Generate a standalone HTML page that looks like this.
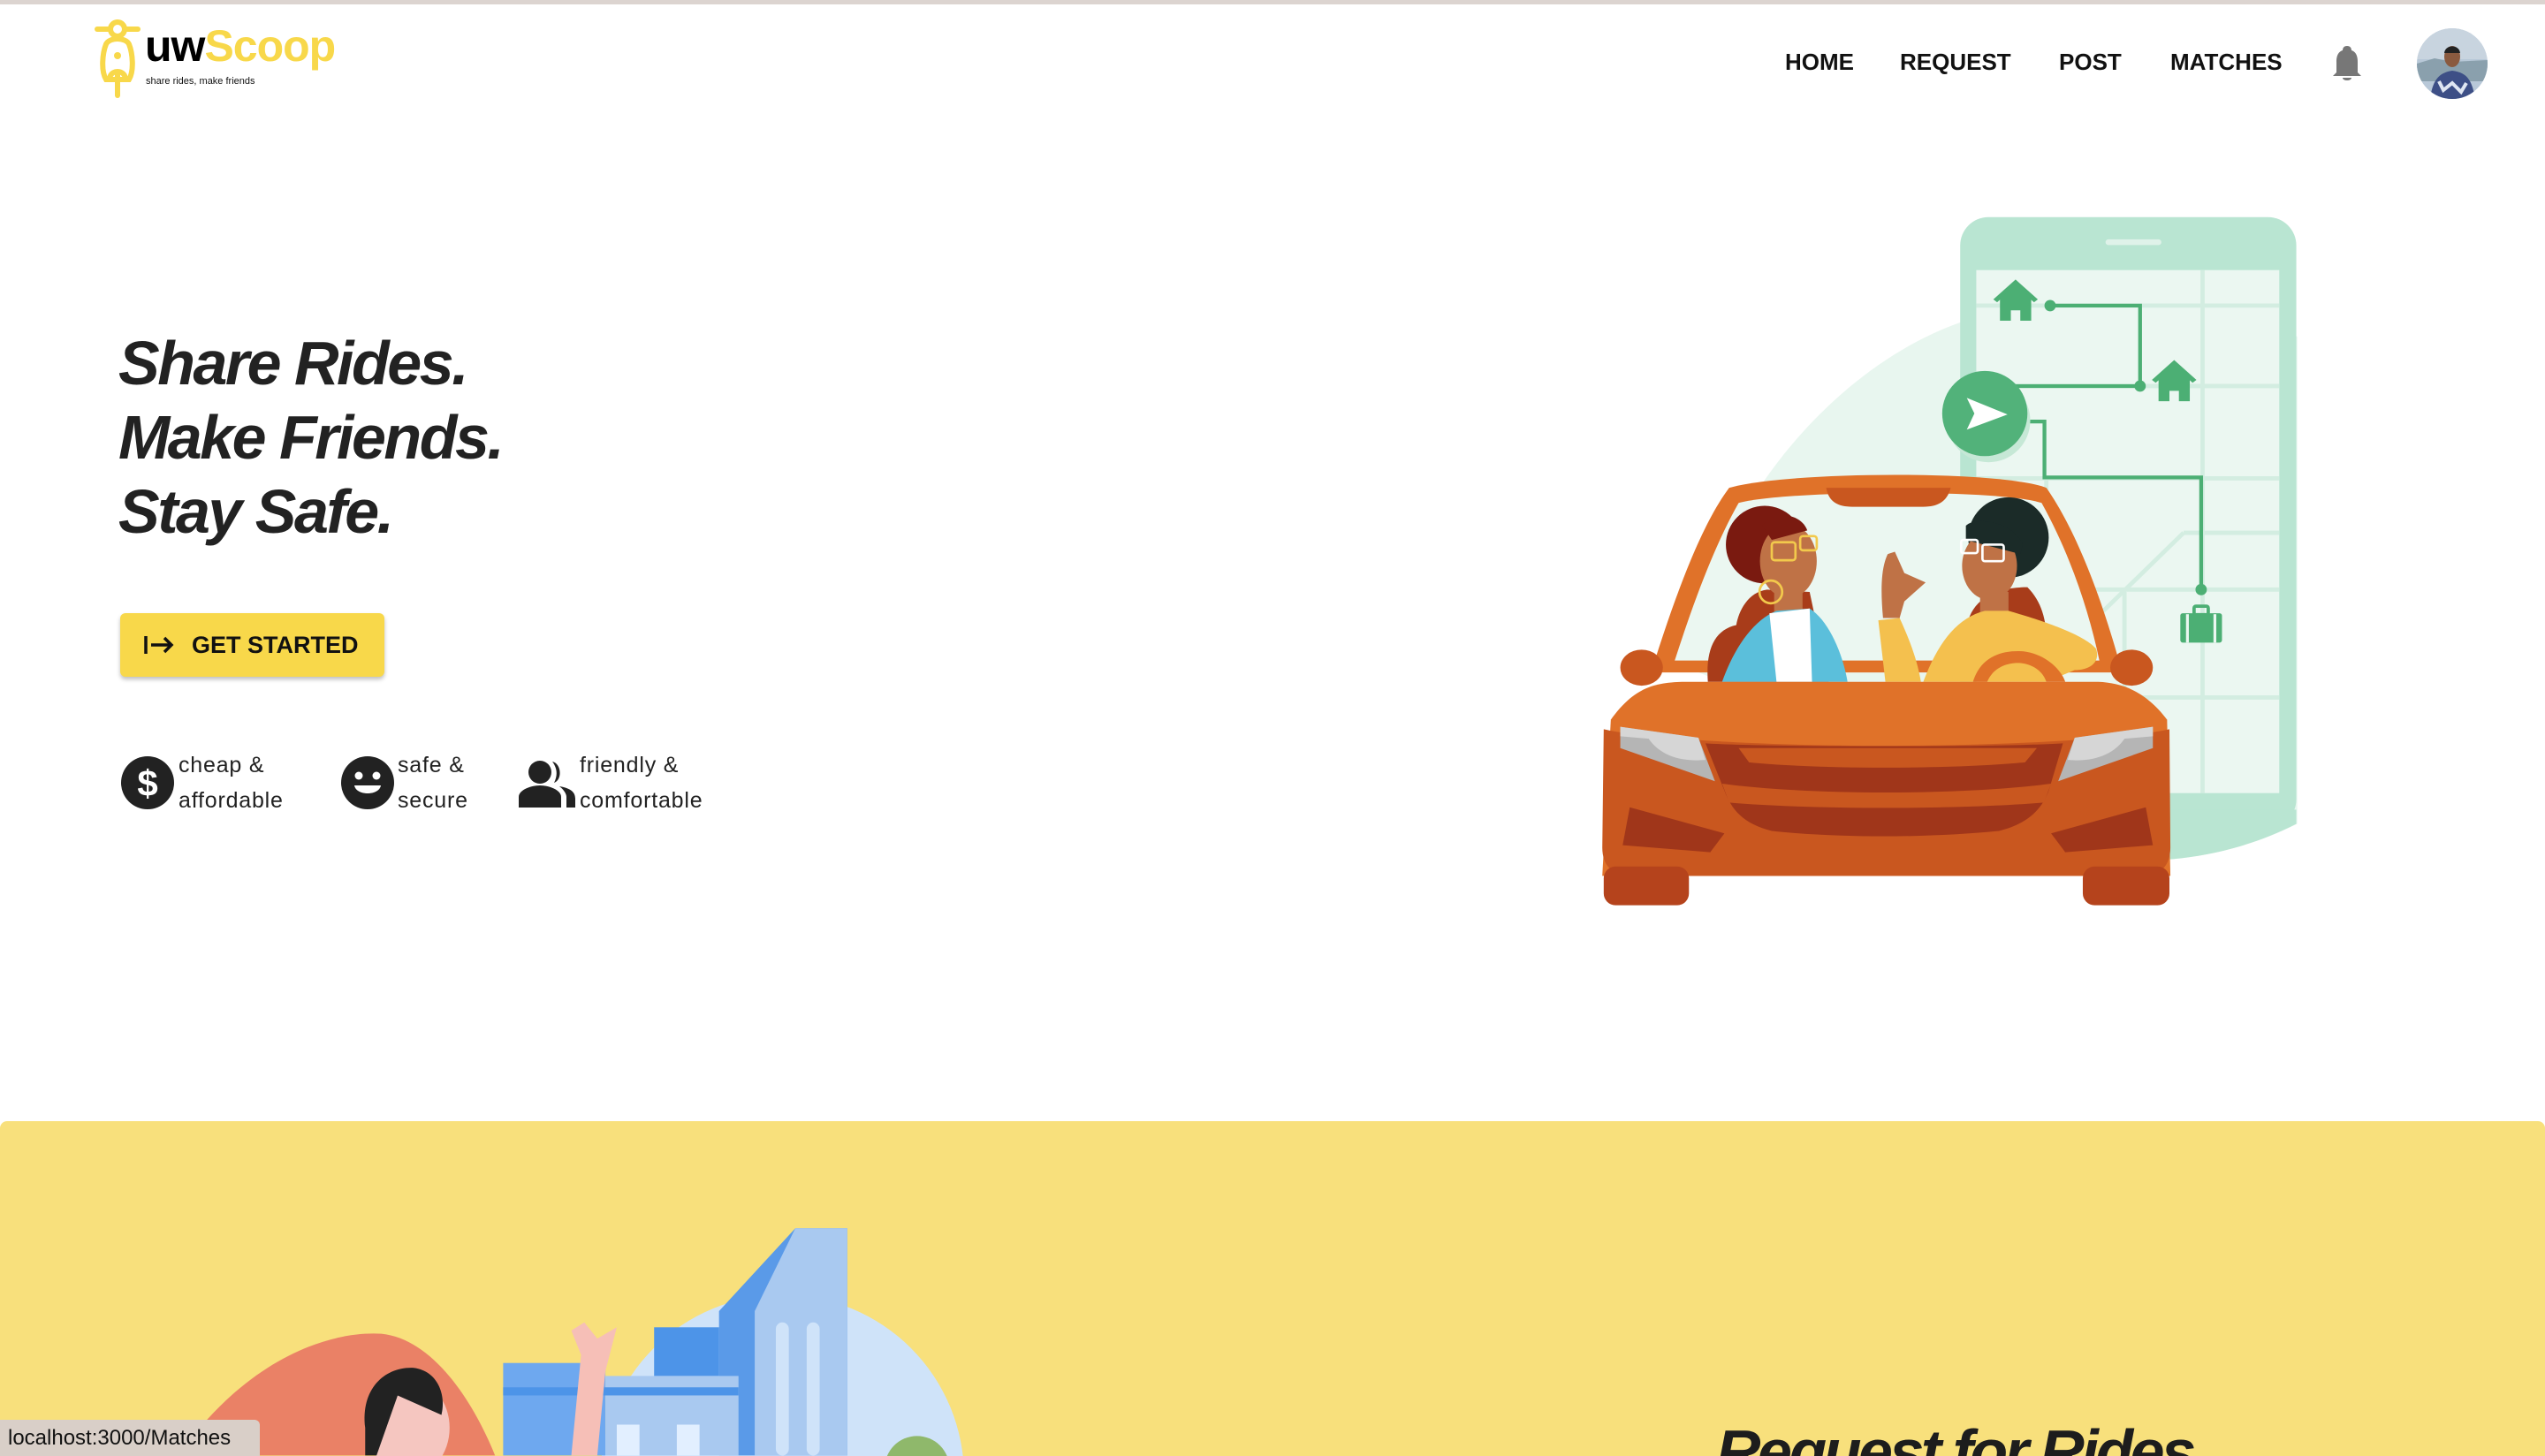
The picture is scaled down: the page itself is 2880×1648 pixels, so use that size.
<!DOCTYPE html>
<html><head><meta charset="utf-8"><style>
html,body{margin:0;padding:0;width:2880px;height:1648px;overflow:hidden;}
body{position:relative;background:#fff;font-family:"Liberation Sans",Arial,sans-serif;color:#222;}
.topline{position:absolute;left:0;top:0;width:2880px;height:5px;background:#dcd4d0;}
.abs{position:absolute;}
.nav a{position:absolute;top:55px;font-size:26px;font-weight:bold;color:#111;text-decoration:none;}
.h1{position:absolute;left:134px;top:369px;font-size:70px;font-weight:bold;font-style:italic;line-height:84px;letter-spacing:-2.5px;color:#222;}
.btn{position:absolute;left:136px;top:694px;width:299px;height:72px;background:#f8d84a;border-radius:6px;box-shadow:0 3px 5px rgba(0,0,0,.25);}
.btn span{position:absolute;left:81px;top:21px;font-size:27px;font-weight:bold;color:#111;}
.feat{position:absolute;top:846px;font-size:25px;line-height:40px;letter-spacing:.8px;color:#222;}
.clip{position:absolute;left:0;top:1269px;width:2880px;height:379px;overflow:hidden;background:#f8e07c;border-radius:8px 8px 0 0;}
.req{position:absolute;left:1942px;top:339px;font-size:70px;font-weight:bold;font-style:italic;letter-spacing:-3.5px;color:#1d1d1d;line-height:1;white-space:nowrap;}
.status{position:absolute;left:0;top:1607px;width:294px;height:41px;background:#d9cfc8;border-top-right-radius:6px;font-size:24px;line-height:41px;padding-left:9px;box-sizing:border-box;color:#111;}
</style></head><body>
<div class="topline"></div>

<svg class="abs" style="left:106px;top:20px" width="56" height="92" viewBox="0 0 56 92">
  <g fill="none" stroke="#f8d84a" stroke-width="6" stroke-linecap="round">
    <line x1="4" y1="13" x2="50" y2="13"/>
    <circle cx="27" cy="13" r="8" fill="#fff"/>
    <path d="M14 70 C 8 60 10 40 14 30 C 18 22 36 22 40 30 C 44 40 46 60 40 70 Z"/>
    <path d="M18 70 C 18 58 36 58 36 70"/>
    <line x1="27" y1="64" x2="27" y2="88"/>
  </g>
  <circle cx="27" cy="43" r="4" fill="#f8d84a"/>
</svg>
<div class="abs" style="left:164px;top:22px;font-size:50px;font-weight:bold;letter-spacing:-1px;line-height:60px;"><span style="color:#000">uw</span><span style="color:#f8d84a">Scoop</span></div>
<div class="abs" style="left:165px;top:86px;font-size:11px;color:#111;">share rides, make friends</div>

<div class="nav">
  <a style="left:2020px">HOME</a>
  <a style="left:2150px">REQUEST</a>
  <a style="left:2330px">POST</a>
  <a style="left:2456px">MATCHES</a>
</div>
<svg class="abs" style="left:2638px;top:50px" width="36" height="44" viewBox="0 0 36 44">
  <path d="M18 2 C 14 2 13 5 13 7 C 7 9 6 15 6 20 L 6 32 L 2 36 L 34 36 L 30 32 L 30 20 C 30 15 29 9 23 7 C 23 5 22 2 18 2 Z" fill="#777"/>
  <path d="M13 38 L 23 38 C 23 42 13 42 13 38 Z" fill="#777"/>
</svg>
<svg class="abs" style="left:2735px;top:32px" width="80" height="80" viewBox="0 0 80 80">
  <defs><clipPath id="av"><circle cx="40" cy="40" r="40"/></clipPath></defs>
  <g clip-path="url(#av)">
    <rect width="80" height="80" fill="#b8c8d8"/>
    <rect y="0" width="80" height="35" fill="#c8d4df"/>
    <path d="M0 40 L 20 34 L 40 38 L 80 36 L 80 60 L 0 60 Z" fill="#8aa0ad"/>
    <path d="M15 80 C 18 55 28 50 40 48 C 54 50 62 55 66 80 Z" fill="#3d4f86"/>
    <path d="M25 60 L 30 70 L 40 62 L 50 72 L 56 62" stroke="#dfe6f2" stroke-width="4" fill="none"/>
    <ellipse cx="40" cy="32" rx="9" ry="12" fill="#8a5a3f"/>
    <path d="M31 28 C 32 18 48 18 49 28 Z" fill="#222"/>
  </g>
</svg>

<div class="h1">Share Rides.<br>Make Friends.<br>Stay Safe.</div>
<div class="btn">
  <svg class="abs" style="left:26px;top:24px" width="36" height="24" viewBox="0 0 36 24"><g stroke="#111" stroke-width="3.5" fill="none"><line x1="3" y1="2" x2="3" y2="22"/><line x1="9" y1="12" x2="32" y2="12"/><polyline points="24,4 32,12 24,20"/></g></svg>
  <span>GET STARTED</span>
</div>

<svg class="abs" style="left:136px;top:855px" width="62" height="62" viewBox="0 0 62 62"><circle cx="31" cy="31" r="30" fill="#222"/><text x="31" y="46" text-anchor="middle" font-family="Liberation Sans" font-weight="bold" font-size="42" fill="#fff">$</text></svg>
<div class="feat" style="left:202px">cheap &amp;<br>affordable</div>
<svg class="abs" style="left:385px;top:855px" width="62" height="62" viewBox="0 0 62 62"><circle cx="31" cy="31" r="30" fill="#222"/><circle cx="21" cy="23" r="4.5" fill="#fff"/><circle cx="41" cy="23" r="4.5" fill="#fff"/><path d="M16 34 L 46 34 C 44 46 18 46 16 34 Z" fill="#fff"/></svg>
<div class="feat" style="left:450px">safe &amp;<br>secure</div>
<svg class="abs" style="left:587px;top:858px" width="66" height="56" viewBox="0 0 66 56"><circle cx="24" cy="16" r="13" fill="#222"/><path d="M0 56 L 0 44 C 0 36 14 31 24 31 C 34 31 48 36 48 44 L 48 56 Z" fill="#222"/><path d="M38 4 C 48 6 50 24 40 28 C 44 20 44 12 38 4 Z" fill="#222"/><path d="M46 32 C 58 34 64 38 64 46 L 64 56 L 54 56 L 54 44 C 54 40 50 35 46 32 Z" fill="#222"/></svg>
<div class="feat" style="left:656px">friendly &amp;<br>comfortable</div>

<svg class="abs" style="left:1780px;top:220px" width="840" height="840" viewBox="0 0 1568 1568">
  <path d="M240 1000 C 300 650 560 360 820 270 L 1530 300 L 1530 1330 C 1420 1385 1320 1400 1260 1405 Z" fill="#e8f6ef"/>
  <rect x="818" y="48" width="710" height="1290" rx="60" fill="#b9e5d2"/>
  <path d="M1528 1300 L 1528 1330 C 1420 1385 1320 1400 1260 1405 L 1260 1300 Z" fill="#b9e5d2"/>
  <rect x="852" y="160" width="640" height="1105" fill="#ebf7f1"/>
  <rect x="1125" y="95" width="118" height="12" rx="6" fill="#dff2e9"/>
  <g stroke="#d3ede1" stroke-width="9" fill="none">
    <line x1="1330" y1="160" x2="1330" y2="1265"/>
    <line x1="852" y1="235" x2="1492" y2="235"/>
    <line x1="852" y1="405" x2="1492" y2="405"/>
    <line x1="852" y1="600" x2="1492" y2="600"/>
    <line x1="1290" y1="715" x2="1492" y2="715"/>
    <line x1="1000" y1="835" x2="1492" y2="835"/>
    <line x1="1000" y1="600" x2="1000" y2="835"/>
    <line x1="852" y1="1063" x2="1492" y2="1063"/>
    <line x1="1290" y1="715" x2="1100" y2="900"/>
    <line x1="1165" y1="840" x2="1165" y2="1265"/>
  </g>
  <g stroke="#4caf74" stroke-width="8" fill="none">
    <path d="M1008 235 H1198 V405 H935"/>
    <path d="M958 480 H996 V598 H1327 V835"/>
  </g>
  <g fill="#4caf74">
    <circle cx="1008" cy="235" r="12"/><circle cx="1198" cy="405" r="12"/><circle cx="1327" cy="835" r="12"/>
    <path d="M888 222 L 935 180 L 982 222 L 974 228 L 935 194 L 896 228 Z"/>
    <path d="M902 220 L 935 192 L 968 220 L 968 267 L 945 267 L 945 245 L 925 245 L 925 267 L 902 267 Z"/>
    <path d="M1223 392 L 1270 350 L 1317 392 L 1309 398 L 1270 364 L 1231 398 Z"/>
    <path d="M1237 390 L 1270 362 L 1303 390 L 1303 437 L 1280 437 L 1280 415 L 1260 415 L 1260 437 L 1237 437 Z"/>
    <rect x="1283" y="885" width="88" height="62" rx="5"/>
    <rect x="1312" y="870" width="30" height="18" rx="4" fill="none" stroke="#4caf74" stroke-width="7"/>
  </g>
  <g stroke="#ebf7f1" stroke-width="6"><line x1="1298" y1="887" x2="1298" y2="947"/><line x1="1356" y1="887" x2="1356" y2="947"/></g>
  <circle cx="878" cy="478" r="88" fill="#c6e8d6"/>
  <circle cx="870" cy="463" r="90" fill="#52b27a"/>
  <path d="M832 430 L 918 465 L 832 497 L 848 463 Z" fill="#fff"/>
  <path d="M165 1010 C 215 850 270 700 330 620 C 450 585 900 582 1000 620 C 1070 720 1125 880 1160 1010 Z" fill="#e07229"/>
  <path d="M215 985 C 255 860 300 740 350 652 C 450 625 900 622 990 652 C 1050 760 1090 880 1112 985 Z" fill="#ebf7f1"/>
  <path d="M535 620 L 798 620 C 790 650 770 660 740 660 L 590 660 C 560 660 540 650 535 620 Z" fill="#c9571f"/>
  <path d="M285 1030 C 280 960 300 920 345 910 C 350 880 370 840 410 835 L 500 840 L 540 1030 Z" fill="#a83c1a"/>
  <path d="M835 900 C 850 850 900 830 960 830 C 990 860 1000 900 1000 940 L 850 1030 Z" fill="#a83c1a"/>
  <circle cx="405" cy="740" r="82" fill="#7a1a10"/>
  <ellipse cx="455" cy="775" rx="60" ry="78" fill="#bf7246"/>
  <path d="M400 700 C 420 670 480 670 495 710 L 420 730 Z" fill="#7a1a10"/>
  <rect x="425" y="830" width="60" height="60" fill="#bf7246"/>
  <path d="M315 1030 C 340 960 380 900 430 880 L 500 875 C 540 900 570 970 580 1030 Z" fill="#5bbfdb"/>
  <path d="M415 885 L 500 875 L 505 1030 L 430 1030 Z" fill="#fff"/>
  <circle cx="418" cy="840" r="24" fill="none" stroke="#f2c94c" stroke-width="5"/>
  <g fill="none" stroke="#f2c94c" stroke-width="5"><rect x="420" y="735" width="50" height="38" rx="6"/><rect x="480" y="722" width="35" height="30" rx="6"/></g>
  <circle cx="920" cy="725" r="85" fill="#1b2b28"/>
  <ellipse cx="880" cy="785" rx="58" ry="72" fill="#bf7246"/>
  <path d="M830 700 C 850 680 930 690 950 740 L 945 760 L 830 730 Z" fill="#1b2b28"/>
  <rect x="860" y="840" width="60" height="60" fill="#bf7246"/>
  <path d="M645 900 L 690 895 C 720 960 730 1000 735 1030 L 660 1030 Z" fill="#f4c04e"/>
  <path d="M740 1030 C 770 950 810 895 870 880 L 920 880 C 990 900 1080 930 1105 960 C 1115 990 1090 1005 1060 1005 L 1000 1030 Z" fill="#f4c04e"/>
  <path d="M655 895 C 650 840 650 790 665 760 L 680 755 L 700 800 L 745 820 L 700 860 L 690 895 Z" fill="#bf7246"/>
  <path d="M845 1030 C 860 980 900 965 940 965 C 990 965 1030 1000 1040 1030 L 1000 1030 C 990 1000 960 990 940 990 C 910 990 885 1005 875 1030 Z" fill="#e07229"/>
  <g fill="none" stroke="#fff" stroke-width="5"><rect x="820" y="730" width="35" height="28" rx="5"/><rect x="865" y="740" width="45" height="35" rx="5"/></g>
  <ellipse cx="145" cy="1000" rx="45" ry="38" fill="#c9571f"/>
  <ellipse cx="1180" cy="1000" rx="45" ry="38" fill="#c9571f"/>
  <path d="M80 1110 C 130 1040 175 1032 230 1030 L 1110 1030 C 1160 1032 1210 1050 1255 1110 L 1262 1440 L 62 1440 Z" fill="#e07229"/>
  <path d="M65 1130 C 150 1150 400 1165 660 1165 C 920 1165 1170 1150 1260 1130 L 1262 1380 C 1262 1420 1240 1440 1200 1440 L 125 1440 C 85 1440 62 1420 62 1380 Z" fill="#c9571f"/>
  <path d="M280 1160 C 400 1168 920 1168 1035 1160 L 1005 1260 C 990 1300 960 1330 900 1345 C 750 1360 560 1360 420 1345 C 360 1330 335 1300 320 1260 Z" fill="#a0361a"/>
  <path d="M350 1170 L 980 1170 L 955 1200 C 800 1215 520 1215 372 1200 Z" fill="#c9571f"/>
  <path d="M315 1245 C 500 1270 820 1270 1010 1245 L 995 1285 C 820 1300 500 1300 330 1285 Z" fill="#c9571f"/>
  <path d="M100 1125 L 265 1148 L 300 1240 L 100 1170 Z" fill="#b5b5b5"/>
  <path d="M100 1125 L 265 1148 L 280 1195 C 220 1200 180 1180 160 1150 L 100 1145 Z" fill="#d6d6d6"/>
  <path d="M1225 1125 L 1060 1148 L 1025 1240 L 1225 1170 Z" fill="#b5b5b5"/>
  <path d="M1225 1125 L 1060 1148 L 1045 1195 C 1105 1200 1145 1180 1165 1150 L 1225 1145 Z" fill="#d6d6d6"/>
  <path d="M120 1295 L 320 1350 L 290 1390 L 105 1375 Z" fill="#a0361a"/>
  <path d="M1210 1295 L 1010 1350 L 1040 1390 L 1225 1375 Z" fill="#a0361a"/>
  <rect x="65" y="1420" width="180" height="82" rx="25" fill="#b5431c"/>
  <rect x="1077" y="1420" width="183" height="82" rx="25" fill="#b5431c"/>
</svg>

<div class="clip">
<svg class="abs" style="left:0;top:0" width="2880" height="379" viewBox="0 691 1568 206.3">
  <circle cx="482" cy="910" r="112" fill="#cfe3f9"/>
  <path d="M110 897 C 150 840 200 820 235 822 C 265 825 290 860 305 897 Z" fill="#ea8166"/>
  <path d="M443 808 L 490 757 L 522 757 L 522 897 L 443 897 Z" fill="#5a9ae8"/>
  <path d="M465 808 L 490 757 L 522 757 L 522 897 L 465 897 Z" fill="#a9c9f0"/>
  <rect x="478" y="815" width="8" height="82" rx="4" fill="#cfe3f9"/>
  <rect x="497" y="815" width="8" height="82" rx="4" fill="#cfe3f9"/>
  <rect x="403" y="818" width="40" height="30" fill="#4d94e8"/>
  <rect x="310" y="840" width="63" height="57" fill="#6ea8ef"/>
  <rect x="373" y="848" width="82" height="49" fill="#a9c9f0"/>
  <rect x="310" y="855" width="145" height="5" fill="#4d94e8"/>
  <rect x="380" y="878" width="14" height="19" fill="#e2efff"/>
  <rect x="417" y="878" width="14" height="19" fill="#e2efff"/>
  <path d="M352 897 L 358 835 L 352 820 L 360 815 L 368 825 L 380 818 L 373 845 L 368 897 Z" fill="#f6bfb7"/>
  <ellipse cx="252" cy="880" rx="25" ry="30" fill="#f5c6c0"/>
  <path d="M225 880 C 222 855 238 842 255 843 C 270 845 275 860 272 872 L 245 860 L 232 897 L 225 897 Z" fill="#222"/>
  <circle cx="565" cy="905" r="20" fill="#8fb86b"/>
</svg>
<div class="req">Request for Rides</div>
</div>
<div class="status">localhost:3000/Matches</div>
</body></html>
